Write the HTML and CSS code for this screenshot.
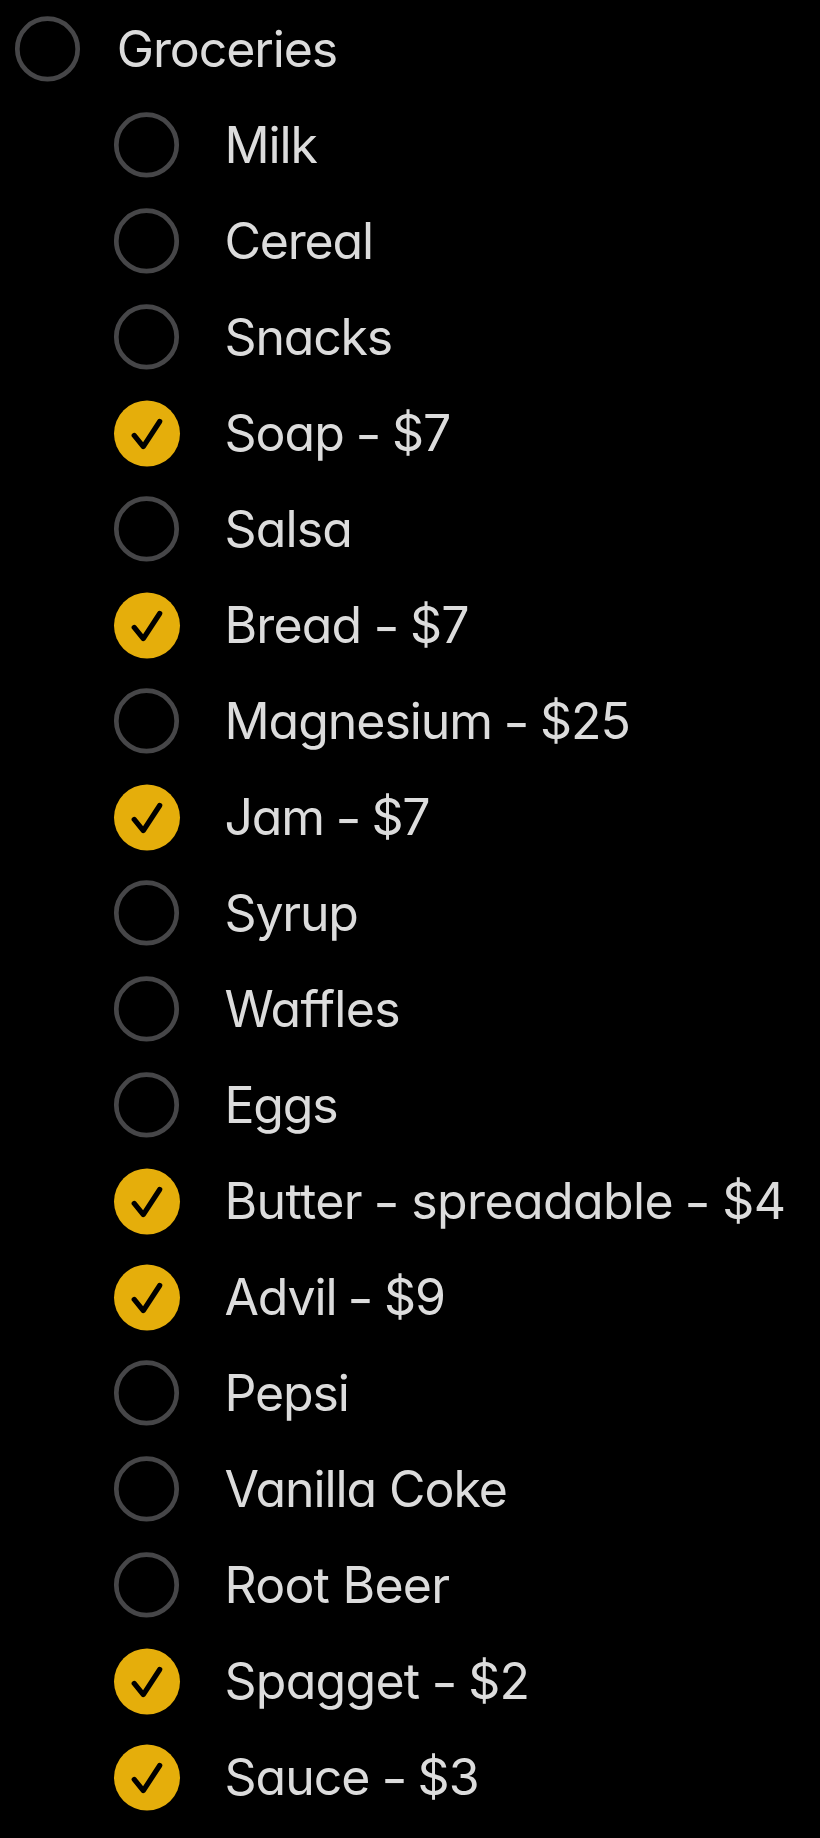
FILE: index.html
```
<!DOCTYPE html>
<html lang="en">
<head>
<meta charset="utf-8">
<title>Groceries</title>
<link rel="stylesheet" href="styles.css">
</head>
<body>
<svg class="defs" width="0" height="0"><symbol id="check" viewBox="-1 -1 68 68"><circle cx="33" cy="33.6" r="33" fill="#e5ae0b"/><path d="M20.2 35.4 L29.3 46.6 L45.7 21.5" fill="none" stroke="#000" stroke-width="5.2" stroke-linecap="round" stroke-linejoin="round"/></symbol><symbol id="ring" viewBox="-1 -1 68 68"><circle cx="32.5" cy="32.9" r="30.2" fill="none" stroke="#464648" stroke-width="4.7"/></symbol></svg>
<main class="list" id="list"></main>
<script src="list.js"></script>
</body>
</html>
```
FILE: styles.css
```
body { margin: 0; background: #000; color: #dcdcdc; font-family: Inter, "Liberation Sans", sans-serif; }
.defs { display: block; height: 0; }
.list { height: 1838px; overflow: hidden; padding-top: 1px; box-sizing: border-box; }
.row { display: flex; align-items: center; height: 96px; box-sizing: border-box; padding-left: 113px; gap: 43.5px; }
.row.parent { padding-left: 14px; gap: 34.7px; }
.mark { width: 68px; height: 68px; flex: none; }
.label { font-size: 50px; line-height: 60px; white-space: pre; font-feature-settings: "cv11" 1; }
.dash { display: inline-block; transform: translateY(2px) scaleX(1.15); }
```
FILE: list.js
```
// name, done, letter spacing in px
const items = [
  ["Groceries", 0, -1.1], ["Milk", 0, -1.1], ["Cereal", 0, -1.2], ["Snacks", 0, -1.2], ["Soap - $7", 1, -1],
  ["Salsa", 0, -0.85], ["Bread - $7", 1, -0.85], ["Magnesium - $25", 0, -1.05], ["Jam - $7", 1, -1.2],
  ["Syrup", 0, -1.2], ["Waffles", 0, -0.65], ["Eggs", 0, -1.25], ["Butter - spreadable - $4", 1, -0.62],
  ["Advil - $9", 1, -1.15], ["Pepsi", 0, -1.15], ["Vanilla Coke", 0, -1.07], ["Root Beer", 0, -0.77],
  ["Spagget - $2", 1, -0.75], ["Sauce - $3", 1, -1]
];
document.getElementById("list").innerHTML = items.map(([name, done, tracking], i) =>
  `<div class="row${i ? "" : " parent"}"><svg class="mark"><use href="#${done ? "check" : "ring"}"/></svg><span class="label" style="letter-spacing:${tracking}px">${name.replaceAll("-", '<span class="dash">-</span>')}</span></div>`
).join("");
```
